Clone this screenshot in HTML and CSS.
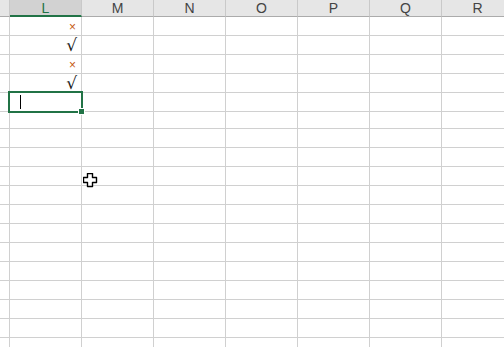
FILE: index.html
```html
<!DOCTYPE html>
<html>
<head>
<meta charset="utf-8">
<link rel="stylesheet" href="styles.css">
</head>
<body>
<div class="sheet">
  <div class="grid">
    <div class="hd"></div><div class="hd sel">L</div><div class="hd">M</div><div class="hd">N</div><div class="hd">O</div><div class="hd">P</div><div class="hd">Q</div><div class="hd">R</div>
    <div class="c"></div><div class="c v"><span class="x">×</span></div><div class="c"></div><div class="c"></div><div class="c"></div><div class="c"></div><div class="c"></div><div class="c"></div>
    <div class="c"></div><div class="c v"><span class="ok">√</span></div><div class="c"></div><div class="c"></div><div class="c"></div><div class="c"></div><div class="c"></div><div class="c"></div>
    <div class="c"></div><div class="c v"><span class="x">×</span></div><div class="c"></div><div class="c"></div><div class="c"></div><div class="c"></div><div class="c"></div><div class="c"></div>
    <div class="c"></div><div class="c v"><span class="ok">√</span></div><div class="c"></div><div class="c"></div><div class="c"></div><div class="c"></div><div class="c"></div><div class="c"></div>
  </div>
  <div class="grid rest" id="rest"></div>
  <div class="selbox"><span class="caret"></span></div>
  <div class="handle"></div>
  <svg class="cursor" width="15" height="15" viewBox="0 0 15 15">
    <path d="M4.5 0.5 H9.5 V4.5 H13.5 V9.5 H9.5 V13.5 H4.5 V9.5 H0.5 V4.5 H4.5 Z" fill="#fff" stroke="#000" stroke-width="1.4" stroke-linejoin="round"/>
  </svg>
</div>
<script>
var r = document.getElementById('rest'), h = '';
for (var i = 0; i < 14 * 8; i++) h += '<div class="c"></div>';
r.innerHTML = h;
</script>
</body>
</html>
```
FILE: styles.css
```css
html, body {
  margin: 0;
  padding: 0;
  background: #fff;
}
.sheet {
  position: relative;
  width: 504px;
  height: 347px;
  overflow: hidden;
  font-family: "Liberation Sans", Arial, sans-serif;
}
.grid {
  display: grid;
  grid-template-columns: 10px repeat(7, 72px);
  grid-template-rows: 17px;
  grid-auto-rows: 19px;
}
.grid .hd {
  height: 17px;
  box-sizing: border-box;
  background: #e6e6e6;
  border-right: 1px solid #c9c9c9;
  border-bottom: 1px solid #ababab;
  color: #444;
  font-size: 14px;
  line-height: 16px;
  text-align: center;
}
.grid .hd.sel {
  background: #d2d2d2;
  color: #217346;
  border-bottom: 2px solid #217346;
}
.c {
  box-sizing: border-box;
  border-right: 1px solid #d0d0d0;
  border-bottom: 1px solid #d0d0d0;
  height: 19px;
}
.v {
  display: flex;
  justify-content: flex-end;
  align-items: flex-end;
  padding-right: 4px;
}
.x {
  color: #c65911;
  font-size: 12px;
  line-height: 16px;
  margin-right: 1px;
}
.ok {
  color: #1a1a1a;
  font-size: 17px;
  line-height: 18px;
  font-family: "DejaVu Sans", sans-serif;
}
.selbox {
  position: absolute;
  left: 8px;
  top: 91px;
  width: 75px;
  height: 22px;
  box-sizing: border-box;
  border: 2px solid #217346;
}
.caret {
  position: absolute;
  left: 10px;
  top: 2px;
  width: 1px;
  height: 14px;
  background: #000;
}
.handle {
  position: absolute;
  left: 78px;
  top: 108px;
  width: 5px;
  height: 5px;
  background: #217346;
  border: 1px solid #fff;
}
.cursor {
  position: absolute;
  left: 83px;
  top: 173px;
}
```
